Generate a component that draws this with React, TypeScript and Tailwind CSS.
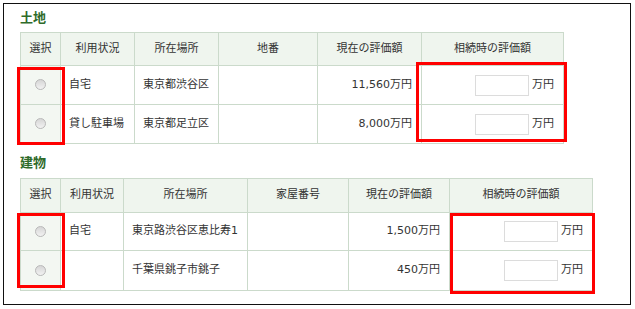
type Row = {
  use: string;
  place: string;
  current: string;
};

const landRows: Row[] = [
  { use: "自宅", place: "東京都渋谷区", current: "11,560万円" },
  { use: "貸し駐車場", place: "東京都足立区", current: "8,000万円" },
];

const buildingRows: Row[] = [
  { use: "自宅", place: "東京路渋谷区恵比寿1", current: "1,500万円" },
  { use: "", place: "千葉県銚子市銚子", current: "450万円" },
];

function Radio() {
  return (
    <span className="inline-block w-[11px] h-[11px] rounded-full border border-[#b9b9b9] bg-gradient-to-b from-[#d6d6d6] to-[#f2f2f2] align-middle" />
  );
}

function Heading({ label }: { label: string }) {
  return <h2 className="text-[13px] leading-[20px] font-bold text-[#2f6b2a]">{label}</h2>;
}

function AssetTable({
  rows,
  widths,
  numberLabel,
  rowHeights,
}: {
  rows: Row[];
  widths: number[];
  numberLabel: string;
  rowHeights: string[];
}) {
  const th = "border border-[#cbdacb] bg-[#eff5ee] font-normal text-center whitespace-nowrap";
  const td = "border border-[#cbdacb] pl-[8px] pr-[9px] whitespace-nowrap";
  return (
    <table className="table-fixed border-collapse text-[11px] text-[#333]">
      <colgroup>
        {widths.map((w, i) => (
          <col key={i} style={{ width: w }} />
        ))}
      </colgroup>
      <thead>
        <tr className={rowHeights[0]}>
          <th className={th}>選択</th>
          <th className={th}>利用状況</th>
          <th className={th}>所在場所</th>
          <th className={th}>{numberLabel}</th>
          <th className={th}>現在の評価額</th>
          <th className={th}>相続時の評価額</th>
        </tr>
      </thead>
      <tbody>
        {rows.map((r, i) => (
          <tr key={i} className={rowHeights[i + 1]}>
            <td className="border border-[#cbdacb] bg-[#f3f7f2] text-center">
              <Radio />
            </td>
            <td className={td}>{r.use}</td>
            <td className={td}>{r.place}</td>
            <td className={td}></td>
            <td className={`${td} text-right`}>{r.current}</td>
            <td className={`${td} text-right`}>
              <div className="flex items-center justify-end gap-[3px]">
                <div className="w-[54px] h-[21px] border border-[#dcdcdc] bg-white" />
                <span>万円</span>
              </div>
            </td>
          </tr>
        ))}
      </tbody>
    </table>
  );
}

export default function App() {
  return (
    <div
      className="w-[635px] h-[309px] bg-white pt-[3px] pl-[3px]"
      style={{ fontFamily: '"DejaVu Sans", "Noto Sans CJK JP", sans-serif' }}
    >
      <div className="w-[628px] h-[302px] border border-[#111] pl-[16px] pt-[4px]">
        <Heading label="土地" />
        <div className="relative mt-[4px] w-fit">
          <AssetTable
            rows={landRows}
            widths={[40, 74, 84, 99, 104, 142]}
            numberLabel="地番"
            rowHeights={["h-[33px]", "h-[39px]", "h-[39px]"]}
          />
          <div className="absolute left-[-3px] top-[35px] w-[48px] h-[78px] border-[3px] border-[#ff0000]" />
          <div className="absolute left-[396px] top-[30px] w-[151px] h-[80px] border-[3px] border-[#ff0000]" />
        </div>
        <div className="mt-[9px]">
          <Heading label="建物" />
        </div>
        <div className="relative mt-[5px] w-fit">
          <AssetTable
            rows={buildingRows}
            widths={[40, 63, 124, 101, 101, 143]}
            numberLabel="家屋番号"
            rowHeights={["h-[34px]", "h-[38px]", "h-[40px]"]}
          />
          <div className="absolute left-[-3px] top-[35px] w-[48px] h-[75px] border-[3px] border-[#ff0000]" />
          <div className="absolute left-[430px] top-[35px] w-[145px] h-[81px] border-[3px] border-[#ff0000]" />
        </div>
      </div>
    </div>
  );
}
